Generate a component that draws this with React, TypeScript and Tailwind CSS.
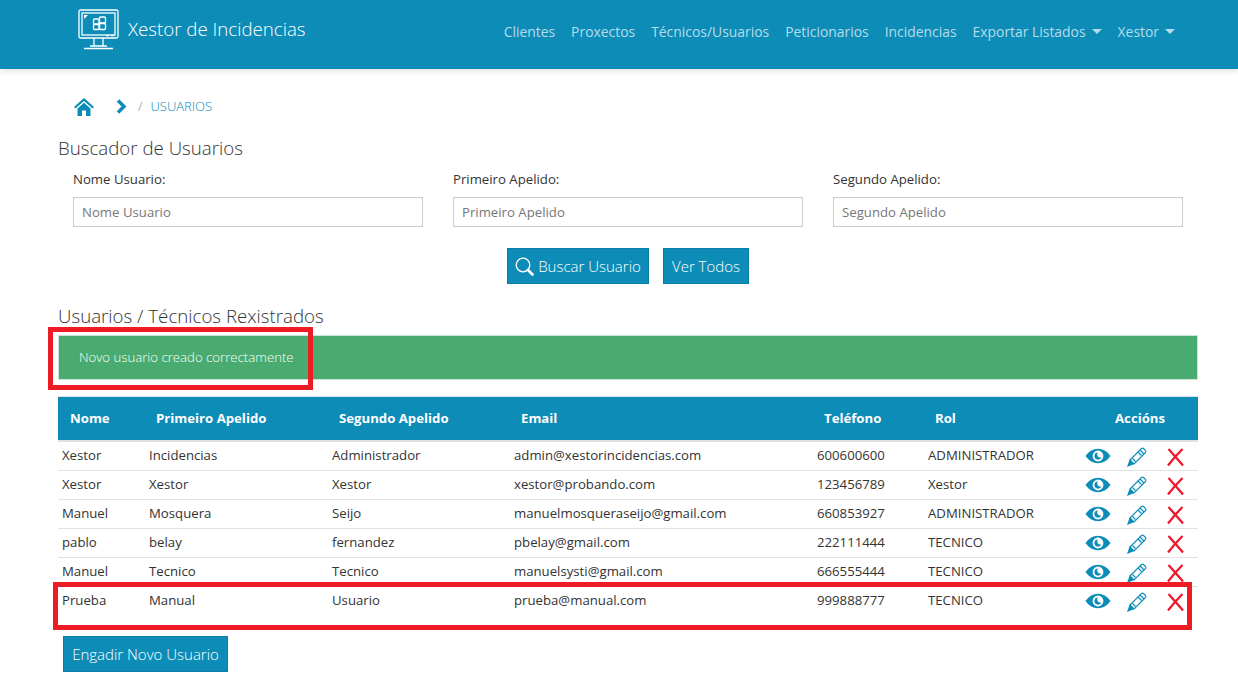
import React from "react";

const Eye = () => (
  <svg width="26" height="16" viewBox="0 0 26 16" className="block">
    <path fill="#0d8cb8" fillRule="evenodd" d="M0.5 8C4 3.2 8.2 0.8 13 0.8S22 3.2 25.5 8C22 12.8 17.8 15.2 13 15.2S4 12.8 0.5 8ZM13 2.6a5.4 5.4 0 1 0 0 10.8a5.4 5.4 0 0 0 0-10.8Z" />
    <path fill="#0d8cb8" d="M13 4.4a3.6 3.6 0 1 0 3.4 4.8a3 3 0 0 1-3.4-4.8Z" />
  </svg>
);

const Pencil = () => (
  <svg width="22" height="22" viewBox="0 0 22 22" fill="none" stroke="#0d8cb8" strokeWidth="1.1" className="block">
    <path d="M4 14L15.5 2.5a1.5 1.5 0 0 1 2 0l2 2a1.5 1.5 0 0 1 0 2L8 18Z" />
    <path d="M14 4l4 4M6.5 12.5l3 3M12 6l3.5 3.5" />
    <path fill="#0d8cb8" stroke="none" d="M1 21l2.6-7.5L8.4 18Z" />
  </svg>
);

const Cross = () => (
  <svg width="17" height="18" viewBox="0 0 17 18" fill="none" stroke="#f0162c" strokeWidth="2.3" className="block">
    <path d="M1.5 1C6 6 11 12 16 17.5M15.5 1C10 6.5 6 11 1 17.5" />
  </svg>
);

const Logo = () => (
  <svg width="41" height="41" viewBox="0 0 41 41" fill="none" stroke="#fff" strokeWidth="1.3" className="block">
    <rect x="1" y="1" width="39" height="28" rx="1.5" />
    <rect x="4" y="4" width="33" height="22" />
    <path fill="#fff" stroke="none" d="M6 6h4l-4 4Z" />
    <rect x="15.5" y="10" width="5.5" height="5" rx="1" />
    <rect x="21.5" y="8" width="6" height="6" rx="1" />
    <rect x="15.5" y="15.5" width="5.5" height="5" rx="1" />
    <rect x="21.5" y="14.5" width="6" height="6" rx="1" />
    <path d="M16 29v8M25 29v8M6 39.5h29M12 37h17" />
    <path stroke="#fff" strokeWidth="1.6" d="M28 26.5h3M33 26.5h3" />
  </svg>
);

const Home = () => (
  <svg width="20" height="18" viewBox="0 0 20 18" className="block">
    <path fill="#0d8cb8" d="M10 0L20 9l-1.4 1.6L10 3 1.4 10.6 0 9ZM3.5 10.5L10 4.8l6.5 5.7V18h-4.5v-5.5H8V18H3.5Z" />
  </svg>
);

const Chevron = () => (
  <svg width="11" height="15" viewBox="0 0 11 15" fill="none" stroke="#0d8cb8" strokeWidth="3.4" className="block">
    <path d="M2 1.5L8 7.5L2 13.5" />
  </svg>
);

const Search = () => (
  <svg width="19" height="19" viewBox="0 0 19 19" fill="none" stroke="#fff" className="block">
    <circle cx="8" cy="8" r="6.8" strokeWidth="1.3" />
    <path d="M13 13l4.5 4.5" strokeWidth="2.6" strokeLinecap="round" />
  </svg>
);

const Caret = () => <span className="ml-[6px] inline-block border-x-[5px] border-t-[5px] border-x-transparent border-t-[#b5dcea]" />;

const navItems = ["Clientes", "Proxectos", "Técnicos/Usuarios", "Peticionarios", "Incidencias"];

const users = [
  ["Xestor", "Incidencias", "Administrador", "admin@xestorincidencias.com", "600600600", "ADMINISTRADOR"],
  ["Xestor", "Xestor", "Xestor", "xestor@probando.com", "123456789", "Xestor"],
  ["Manuel", "Mosquera", "Seijo", "manuelmosqueraseijo@gmail.com", "660853927", "ADMINISTRADOR"],
  ["pablo", "belay", "fernandez", "pbelay@gmail.com", "222111444", "TECNICO"],
  ["Manuel", "Tecnico", "Tecnico", "manuelsysti@gmail.com", "666555444", "TECNICO"],
  ["Prueba", "Manual", "Usuario", "prueba@manual.com", "999888777", "TECNICO"],
];

const gridCols = "grid grid-cols-[87px_183px_182px_303px_111px_148px_126px]";

const Field = ({ label }: { label: string }) => (
  <div className="w-[350px]">
    <div className="h-[18px] text-[13.2px] leading-[18px] text-[#333]">{label}:</div>
    <input
      readOnly
      placeholder={label}
      className="mt-[9px] block h-[30px] w-full border border-[#ccc] bg-white px-2 text-[13.2px] text-[#555] placeholder:text-[#777] outline-none"
    />
  </div>
);

export default function App() {
  return (
    <div className="relative h-[690px] overflow-hidden bg-white font-['Open_Sans',sans-serif] text-[#333]">
      <header className="flex h-[69px] justify-between bg-[#0d8cb8] pl-[78px] pr-[63px] shadow-[0_2px_6px_rgba(0,0,0,0.12)]">
        <div className="flex h-[61px] items-center gap-[9px] pb-[2px]">
          <Logo />
          <span className="text-[18.7px] font-light text-white">Xestor de Incidencias</span>
        </div>
        <nav className="flex h-[64px] items-center gap-4 text-[13.9px] text-[#b5dcea]">
          {navItems.map((n) => (
            <span key={n}>{n}</span>
          ))}
          <span className="flex items-center">Exportar Listados<Caret /></span>
          <span className="flex items-center">Xestor<Caret /></span>
        </nav>
      </header>

      <main className="pl-[58px] pr-[40px]">
        <div className="ml-[16px] mt-[27px] flex h-[20px] items-center pt-[1px] text-[13px] font-light">
          <Home />
          <span className="ml-[22px]"><Chevron /></span>
          <span className="ml-[11px] text-[#888]">/</span>
          <span className="ml-[8px] text-[#0d8cb8]">USUARIOS</span>
        </div>

        <h2 className="mt-[19px] text-[18.7px] font-light leading-[26px] text-[#333]">Buscador de Usuarios</h2>

        <div className="ml-[15px] mt-[9px] flex gap-[30px]">
          <Field label="Nome Usuario" />
          <Field label="Primeiro Apelido" />
          <Field label="Segundo Apelido" />
        </div>

        <div className="mt-[21px] flex justify-center gap-[14px] text-[15px] font-light text-white">
          <button className="flex h-[36px] w-[142px] items-center justify-center gap-[4px] border border-[#0b7ea6] bg-[#0d8cb8]">
            <Search />
            Buscar Usuario
          </button>
          <button className="h-[36px] w-[86px] border border-[#0b7ea6] bg-[#0d8cb8]">Ver Todos</button>
        </div>

        <h2 className="mt-[19px] text-[18.7px] font-light leading-[26px] text-[#333]">Usuarios / Técnicos Rexistrados</h2>

        <div className="mt-[6px] flex h-[45px] items-center border border-[#c9e6d5] bg-[#49ab6f] pl-[20px] text-[13.2px] font-light text-white">
          Novo usuario creado correctamente
        </div>

        <section className="mt-[16px] text-[13.2px]">
          <div className={`${gridCols} h-[46px] items-center border-b-[2px] border-t-[1px] border-b-[#dee2e6] border-t-[#dee2e6] bg-[#0d8cb8] font-bold text-white`}>
            {["Nome", "Primeiro Apelido", "Segundo Apelido", "Email", "Teléfono", "Rol"].map((h, i) => (
              <div key={h} className={i === 0 ? "pl-[12px]" : "pl-[11px]"}>{h}</div>
            ))}
            <div className="pl-[43px]">Accións</div>
          </div>
          {users.map((u, i) => (
            <div key={i} className={`${gridCols} h-[29px] items-start pt-[4px] ${i < 5 ? "border-b border-[#dee2e6]" : ""}`}>
              {u.map((c, j) => (
                <div key={j} className="pl-[4px] leading-[18px]">{c}</div>
              ))}
              <div className="flex items-start">
                <span className="ml-[13px] mt-[2px]"><Eye /></span>
                <span className="ml-[15px] mt-[0px]"><Pencil /></span>
                <span className="ml-[19px] mt-[2px]"><Cross /></span>
              </div>
            </div>
          ))}
        </section>

        <button className="ml-[5px] mt-[20px] h-[36px] w-[165px] border border-[#0b7ea6] bg-[#0d8cb8] text-[15px] font-light text-white">
          Engadir Novo Usuario
        </button>
      </main>

      <div className="pointer-events-none absolute left-[48px] top-[327px] h-[63px] w-[265px] border-[5px] border-[#ee1c25]" />
      <div className="pointer-events-none absolute left-[53px] top-[582px] h-[48px] w-[1139px] border-[5px] border-[#ee1c25]" />
    </div>
  );
}
